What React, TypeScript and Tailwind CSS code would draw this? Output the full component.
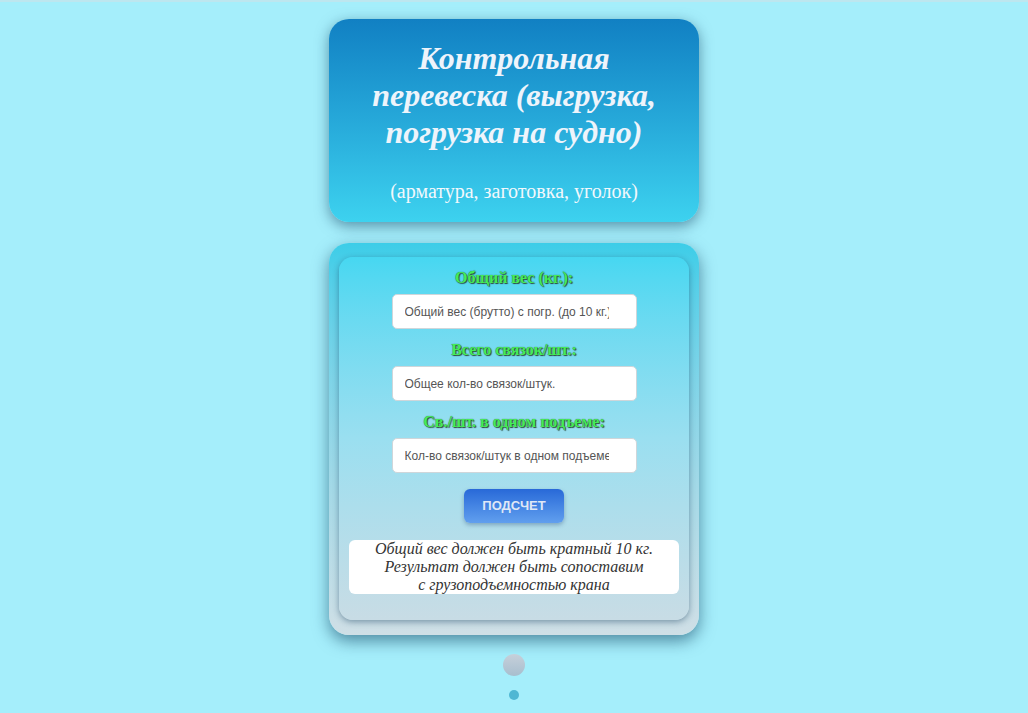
import React from "react";

const serif = { fontFamily: '"Liberation Serif", "Times New Roman", serif' };
const sans = { fontFamily: '"Liberation Sans", Arial, sans-serif' };

function Label({ children, first }: { children: React.ReactNode; first?: boolean }) {
  return (
    <div
      className={`${first ? "" : "mt-[12px]"} mb-[7px] text-center text-[16px] leading-[18px] font-bold text-[#44ec58]`}
      style={{ ...serif, textShadow: "1px 1px 1px #2b4a3a, 0 0 1px #2b4a3a" }}
    >
      {children}
    </div>
  );
}

function Field({ placeholder }: { placeholder: string }) {
  return (
    <div className="flex justify-center">
      <input
        type="text"
        placeholder={placeholder}
        className="h-[35px] w-[245px] rounded-[5px] border border-[#cfd6da] bg-white pl-[12px] pr-[27px] text-[12px] text-[#333] placeholder:text-[#555] outline-none"
        style={sans}
      />
    </div>
  );
}

export default function App() {
  return (
    <div className="min-h-[713px] w-full bg-[#a5eefb]">
      <div className="h-[2px] w-full bg-[#bde6ef]" />
      <div className="flex flex-col items-center">
        <div className="mt-[17px] w-[370px] rounded-[20px] bg-gradient-to-b from-[#1180c3] to-[#3dd2ef] pt-[21px] pb-[19px] text-center shadow-[0_4px_14px_rgba(20,70,100,0.55)]">
          <h1
            className="text-[32px] leading-[37px] font-bold italic text-[#eef4fb] px-[20px]"
            style={serif}
          >
            Контрольная
            <br />
            перевеска (выгрузка,
            <br />
            погрузка на судно)
          </h1>
          <div className="mt-[29px] text-[20px] leading-[23px] text-[#f3f8fc]" style={serif}>
            (арматура, заготовка, уголок)
          </div>
        </div>

        <div className="mt-[21px] w-[370px] rounded-[20px] bg-gradient-to-b from-[#3ccde8] to-[#cfdfe6] px-[10px] pt-[14px] pb-[15px] shadow-[0_6px_16px_rgba(20,70,100,0.6)]">
          <div className="rounded-[14px] bg-gradient-to-b from-[#46d7f1] via-[#9adff0] to-[#c8dce5] pt-[12px] pb-[26px] shadow-[0_2px_6px_rgba(20,60,90,0.45)]">
            <Label first>Общий вес (кг.):</Label>
            <Field placeholder="Общий вес (брутто) с погр. (до 10 кг.)" />
            <Label>Всего связок/шт.:</Label>
            <Field placeholder="Общее кол-во связок/штук." />
            <Label>Св./шт. в одном подъеме:</Label>
            <Field placeholder="Кол-во связок/штук в одном подъеме" />
            <div className="mt-[16px] flex justify-center">
              <button
                className="h-[34px] w-[100px] rounded-[6px] bg-gradient-to-b from-[#2869d8] to-[#619fee] text-[13px] font-bold text-[#dfe7f6] shadow-[0_2px_4px_rgba(30,60,110,0.35)]"
                style={sans}
              >
                ПОДСЧЕТ
              </button>
            </div>
            <div
              className="mx-[10px] mt-[17px] rounded-[6px] bg-white text-center text-[16px] leading-[18px] italic text-[#333]"
              style={serif}
            >
              Общий вес должен быть кратный 10 кг.
              <br />
              Результат должен быть сопоставим
              <br />с грузоподъемностью крана
            </div>
          </div>
        </div>

        <div className="mt-[19px] h-[22px] w-[22px] rounded-full bg-gradient-to-b from-[#c6d0da] to-[#a8bece]" />
        <div className="mt-[14px] h-[10px] w-[10px] rounded-full bg-[#4fb7d3]" />
      </div>
    </div>
  );
}
